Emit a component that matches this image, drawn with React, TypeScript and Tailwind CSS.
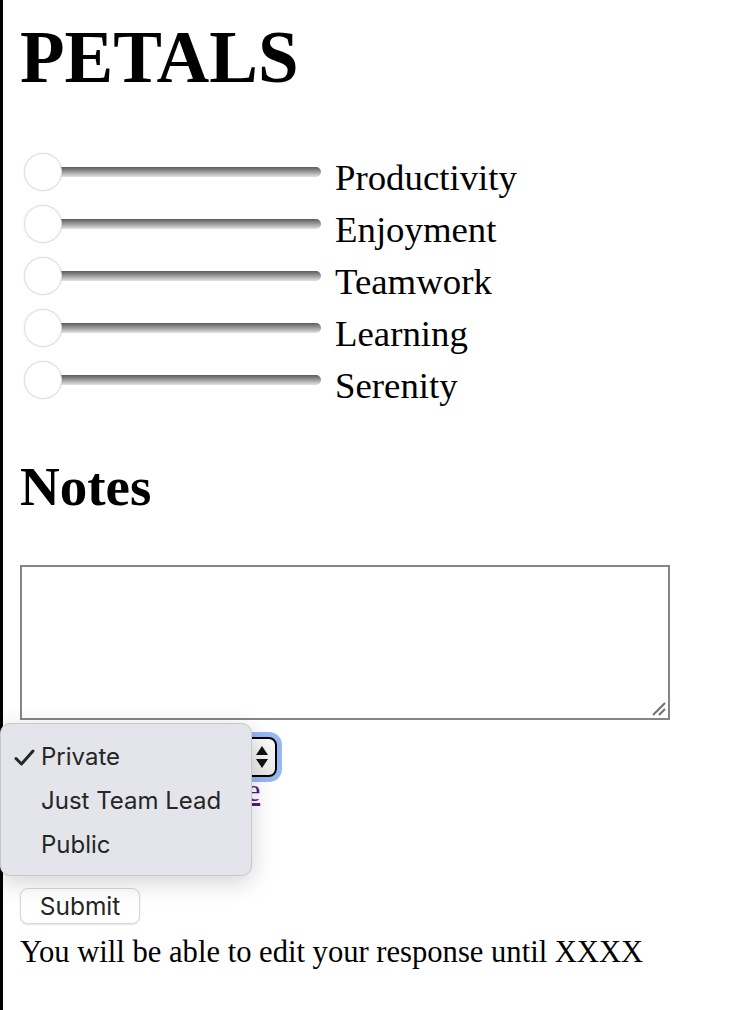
import React from 'react';

const serif = "font-['Liberation_Serif','Times_New_Roman',serif]";
const sans = "font-['Inter','Liberation_Sans',sans-serif]";

const petals = ['Productivity', 'Enjoyment', 'Teamwork', 'Learning', 'Serenity'];

const Slider: React.FC<{ label: string }> = ({ label }) => (
  <div className="flex h-[52px]">
    <div className="flex h-full items-center pl-[4px]">
      <div className="relative h-[38px] w-[297px]">
        <div className="absolute left-[6px] right-0 top-[14px] h-[10px] rounded-full bg-gradient-to-b from-[#5c5c5c] to-[#e4e4e4]" />
        <div className="absolute left-0 top-0 h-[38px] w-[38px] rounded-full border border-[#dedede] bg-white shadow-[0_0_2px_rgba(0,0,0,0.12)]" />
      </div>
    </div>
    <span className={`${serif} ml-[14px] mt-[12px] text-[36.8px] leading-[40px] text-black`}>{label}</span>
  </div>
);

export default function App() {
  return (
    <div className="relative flex min-h-[1010px] w-[748px] bg-white">
      <div className="w-[3px] shrink-0 bg-black" />

      <div className="flex flex-col pl-[17px]">
        <h1 className={`${serif} mt-[17px] text-[73px] font-bold leading-[81px] text-black`}>PETALS</h1>

        <div className="mt-[48px] flex flex-col">
          {petals.map(p => (
            <Slider key={p} label={p} />
          ))}
        </div>

        <h2 className={`${serif} mt-[50px] text-[55px] font-bold leading-[61px] text-black`}>Notes</h2>

        {/* notes box */}
        <div className="relative mt-[48px] h-[155px] w-[650px]">
          <textarea className="h-full w-full resize-none border-2 border-[#858585] bg-white outline-none" />
          <svg className="absolute bottom-[4px] right-[4px]" width="14" height="14" viewBox="0 0 14 14">
            <line x1="1" y1="13" x2="13" y2="1" stroke="#6f6f6f" strokeWidth="2" />
            <line x1="7" y1="13" x2="13" y2="7" stroke="#6f6f6f" strokeWidth="2" />
          </svg>
        </div>

        {/* visibility select */}
        <div className="mt-[17px] flex h-[40px] w-[257px] items-center justify-end rounded-[8px] border-2 border-black bg-gradient-to-b from-[#fafafa] to-[#e8e8e8] pr-[6px] ring-[5px] ring-[#97b6f4]">
          <svg width="14" height="24" viewBox="0 0 14 24">
            <path d="M7 1 L13 10 L1 10 Z" fill="#111" />
            <path d="M7 23 L13 14 L1 14 Z" fill="#111" />
          </svg>
        </div>

        <a href="#" className={`${serif} -mt-[1px] self-start text-[30.6px] leading-[30px] text-[#551a8b] underline`}>
          Viewing preference
        </a>

        <button className={`${sans} mt-[82px] h-[36px] w-[120px] rounded-[8px] border border-[#d8d8d8] bg-white text-[24.5px] leading-none text-[#262626] shadow-[0_1px_2px_rgba(0,0,0,0.12)]`}>
          Submit
        </button>

        <p className={`${serif} mt-[11px] text-[30.6px] leading-[34px] text-black`}>
          You will be able to edit your response until XXXX
        </p>
      </div>

      {/* open select menu */}
      <div className={`${sans} absolute left-0 top-[723px] flex h-[153px] w-[252px] flex-col rounded-[10px] border border-[#c8c8cc] bg-[#e4e5ea] pt-[11px] text-[24px] leading-[44px] text-[#262626] shadow-[0_6px_24px_rgba(0,0,0,0.18)]`}>
        <div className="flex items-center">
          <svg className="ml-[13px] mr-[6px]" width="21" height="17" viewBox="0 0 21 17">
            <path d="M2 9.5 L7.5 15 L19 2" fill="none" stroke="#262626" strokeWidth="3" strokeLinecap="round" strokeLinejoin="round" />
          </svg>
          <span>Private</span>
        </div>
        <div className="pl-[40px]">Just Team Lead</div>
        <div className="pl-[40px]">Public</div>
      </div>
    </div>
  );
}
